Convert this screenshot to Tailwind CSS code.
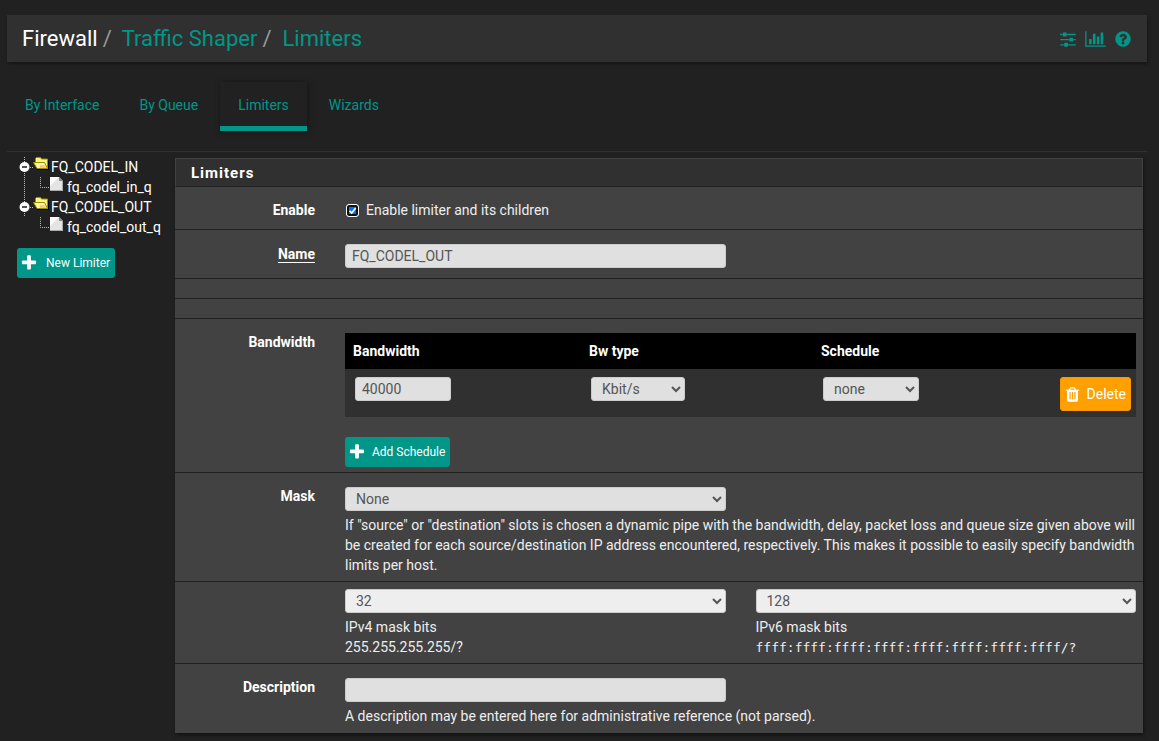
<!DOCTYPE html>
<html lang="en">
  <head>
    <meta charset="UTF-8">
    <meta name="viewport" content="width=device-width, initial-scale=1.0" />
    <title>Firewall: Traffic Shaper: Limiters</title>
    <script src="https://cdn.jsdelivr.net/npm/@tailwindcss/browser@4"></script>
  </head>

  <body class="bg-[#212121] font-[Roboto,sans-serif] text-sm text-[#eeeeee]">
    <!-- icon sprite -->
    <svg class="hidden">
      <symbol id="plus" viewBox="0 0 1792 1792"><path d="M1600 736v192q0 40-28 68t-68 28h-416v416q0 40-28 68t-68 28h-192q-40 0-68-28t-28-68v-416h-416q-40 0-68-28t-28-68v-192q0-40 28-68t68-28h416v-416q0-40 28-68t68-28h192q40 0 68 28t28 68v416h416q40 0 68 28t28 68z"/></symbol>
      <symbol id="branch" viewBox="0 0 34 20">
        <path d="M8.500 0v20M14 10.500h4" fill="none" stroke="#bbb" stroke-dasharray="1 1"/>
        <circle cx="8.500" cy="10" r="5" fill="#fff"/>
        <path d="M6 9h5v2H6z" fill="#555"/>
        <path d="M20 3h12l1 1v9H21z" fill="#000"/>
        <path d="M19.500 5V1.500l1-1h4l1 1.500h6V12" fill="#fbf37a" stroke="#989000"/>
        <path d="M17.500 5.500h11l3 6h-10.500z" fill="#fdf6a0" stroke="#989000"/>
        <path d="M24 8h4.500l2 3H24z" fill="#ffc58a"/>
      </symbol>
      <symbol id="leaf" viewBox="0 0 34 20">
        <path d="M8.500 0v10.500h9" fill="none" stroke="#bbb" stroke-dasharray="1 1"/>
        <path d="M18 0h9l4 4v10H18z" fill="#e4e4e4"/>
        <path d="M18 0h9L18 9z" fill="#fff"/>
        <path d="M27 0v4h4z" fill="#888"/>
        <path d="M18 13.500h12.500V4" fill="none" stroke="#aaa"/>
      </symbol>
    </svg>

    <div class="pt-[15px] pr-3 pb-2 pl-[7px]">
      <header class="flex items-center justify-between bg-[#303030] h-[47px] px-[15px] shadow-[1px_2px_3px_rgba(0,0,0,0.35)]">
        <nav aria-label="Breadcrumb">
          <ol class="flex text-[22px] leading-7">
            <li class="text-white">Firewall</li>
            <li class="text-[#999999] px-[5px]" aria-hidden="true">/</li>
            <li class="pl-[5px]"><a href="#" class="text-[#009688]">Traffic Shaper</a></li>
            <li class="text-[#999999] px-[5px]" aria-hidden="true">/</li>
            <li class="pl-[6px]"><a href="#" class="text-[#009688]">Limiters</a></li>
          </ol>
        </nav>
        <div class="flex gap-2 text-[#009688]">
          <a href="#" title="Limiter settings"><svg class="size-[18px] fill-current" viewBox="0 0 1792 1792"><path d="M480 1408v128h-352v-128h352zm352-128q26 0 45 19t19 45v256q0 26-19 45t-45 19h-256q-26 0-45-19t-19-45v-256q0-26 19-45t45-19h256zm160-384v128h-864v-128h864zm-640-512v128h-224v-128h224zm1312 1024v128h-736v-128h736zm-960-1152q26 0 45 19t19 45v256q0 26-19 45t-45 19h-256q-26 0-45-19t-19-45v-256q0-26 19-45t45-19h256zm640 512q26 0 45 19t19 45v256q0 26-19 45t-45 19h-256q-26 0-45-19t-19-45v-256q0-26 19-45t45-19h256zm320 128v128h-224v-128h224zm0-512v128h-864v-128h864z"/></svg></a>
          <a href="#" title="Related status"><svg class="w-[21px] h-[18px] fill-current" viewBox="0 0 2048 1792"><path d="M640 896v512h-256v-512h256zm384-512v1024h-256v-1024h256zm1024 1152v128h-2048v-1536h128v1408h1920zm-640-896v768h-256v-768h256zm384-384v1152h-256v-1152h256z"/></svg></a>
          <a href="#" title="Help"><svg class="size-[18px] fill-current" viewBox="0 0 1792 1792"><path d="M1024 1376v-192q0-14-9-23t-23-9h-192q-14 0-23 9t-9 23v192q0 14 9 23t23 9h192q14 0 23-9t9-23zm256-672q0-88-55.500-163t-138.500-116-170-41q-243 0-371 213-15 24 8 42l132 100q7 6 19 6 16 0 25-12 53-68 86-92 34-24 86-24 48 0 85.500 26t37.500 59q0 38-20 61t-68 45q-63 28-115.500 86.500t-52.500 125.500v36q0 14 9 23t23 9h192q14 0 23-9t9-23q0-19 21.500-49.500t54.500-49.500q32-18 49-28.500t46-35 44.500-48 28-60.500 12.500-81zm384 192q0 209-103 385.500t-279.500 279.500-385.500 103-385.500-103-279.500-279.500-103-385.500 103-385.500 279.500-279.500 385.500-103 385.500 103 279.500 279.500 103 385.500z"/></svg></a>
        </div>
      </header>

      <nav class="border-b border-[#303030] pt-5 pb-5">
        <ul class="flex gap-1 text-[#009688] leading-5">
          <li><a href="#" class="block px-[18px] pt-[13px] pb-[11px] border-b-5 border-transparent">By Interface</a></li>
          <li><a href="#" class="block px-[18px] pt-[13px] pb-[11px] border-b-5 border-transparent">By Queue</a></li>
          <li><a href="#" class="block px-[18px] pt-[13px] pb-[11px] border-b-5 border-[#009688] shadow-[1px_1px_6px_rgba(0,0,0,0.4)]">Limiters</a></li>
          <li><a href="#" class="block px-[18px] pt-[13px] pb-[11px] border-b-5 border-transparent">Wizards</a></li>
        </ul>
      </nav>

      <div class="flex items-start pr-1">
        <aside class="w-[168px] shrink-0 pt-[5px] pl-[9px]">
          <ul class="leading-5 text-white">
            <li>
              <a href="#" class="flex gap-px"><svg class="w-[34px] h-5"><use href="#branch"/></svg>FQ_CODEL_IN</a>
              <div class="flex">
                <svg class="w-4 h-5" viewBox="0 0 16 20"><path d="M8.500 0v20" stroke="#bbb" stroke-dasharray="1 1"/></svg>
                <a href="#" class="flex gap-px"><svg class="w-[34px] h-5"><use href="#leaf"/></svg>fq_codel_in_q</a>
              </div>
            </li>
            <li>
              <a href="#" class="flex gap-px"><svg class="w-[34px] h-5"><use href="#branch"/></svg>FQ_CODEL_OUT</a>
              <a href="#" class="flex gap-px pl-4"><svg class="w-[34px] h-5"><use href="#leaf"/></svg>fq_codel_out_q</a>
            </li>
          </ul>
          <button type="button" class="flex items-center gap-2 h-[30px] mt-[11px] ml-px pl-[3px] pr-[5px] rounded-[3px] bg-[#009688] text-white text-xs"><svg class="size-[18px] fill-current"><use href="#plus"/></svg>New Limiter</button>
        </aside>

        <form class="grow min-w-0 mt-[6px] bg-[#424242] shadow-[1px_2px_4px_rgba(0,0,0,0.5)] leading-5">
          <h2 class="bg-[#303030] border border-b-[#212121] border-[#424242] px-[15px] py-[3px] h-[29px] text-[15px] leading-[22px] font-bold tracking-[1px] text-white">Limiters</h2>

          <div class="flex gap-[30px] border-b border-[#212121] pt-[13px] pb-[9px] pr-[7px]">
            <span class="w-[140px] shrink-0 text-right font-bold text-white">Enable</span>
            <label class="flex items-center gap-[7px]">
              <span class="grid pl-px">
                <input type="checkbox" name="enabled" checked class="appearance-none col-start-1 row-start-1 size-[13px] rounded-[3px] border border-white bg-[#0075ff] ring-inset ring-2 ring-[#101010]">
                <svg class="col-start-1 row-start-1 size-[13px] pointer-events-none" viewBox="0 0 13 13" fill="none" stroke="#fff" stroke-width="1.600"><path d="M3.500 6.800l2.200 2.200 4-5"/></svg>
              </span>
              Enable limiter and its children
            </label>
          </div>

          <div class="flex gap-[30px] border-b border-[#212121] pt-[14px] pb-[10px] pr-[7px]">
            <label for="name" class="w-[140px] shrink-0 text-right font-bold text-white"><span class="border-b border-white">Name</span></label>
            <div class="grow grid grid-cols-2 gap-[30px]">
              <input id="name" type="text" value="FQ_CODEL_OUT" class="h-6 w-full px-[6px] rounded-[3px] border border-[#cccccc] bg-[#e0e0e0] text-[#555555]">
            </div>
          </div>

          <div class="h-5 border-b border-[#212121]"></div>
          <div class="h-5 border-b border-[#212121]"></div>

          <div class="flex gap-[30px] border-b border-[#212121] pt-[13px] pb-[5px] pr-[7px]">
            <span class="w-[140px] shrink-0 text-right font-bold text-white">Bandwidth</span>
            <div class="grow pt-px">
              <table class="w-full">
                <thead class="bg-black text-white">
                  <tr class="text-left">
                    <th class="w-[236px] p-2">Bandwidth</th>
                    <th class="w-[232px] p-2">Bw type</th>
                    <th class="p-2">Schedule</th>
                    <th></th>
                  </tr>
                </thead>
                <tbody class="bg-[#303030]">
                  <tr class="align-top h-12">
                    <td class="pt-2 pl-[10px]"><input type="text" aria-label="Bandwidth" value="40000" class="block h-6 w-24 px-[6px] rounded-[3px] border border-[#cccccc] bg-[#e0e0e0] text-[#555555]"></td>
                    <td class="pt-2 pl-[10px]"><select aria-label="Bw type" class="block h-6 w-[94px] px-[6px] rounded-[3px] border border-[#cccccc] bg-[#e0e0e0] text-[#555555]"><option>Kbit/s</option></select></td>
                    <td class="pt-2 pl-[10px]"><select aria-label="Schedule" class="block h-6 w-24 px-[6px] rounded-[3px] border border-[#cccccc] bg-[#e0e0e0] text-[#555555]"><option>none</option></select></td>
                    <td class="pt-2 pr-[5px]">
                      <button type="button" class="flex items-center gap-[6px] h-[34px] ml-auto pl-[3px] pr-1 rounded-[3px] border border-[#ff9800] bg-[#ffa000] text-white"><svg class="size-[17px] fill-current" viewBox="0 0 1792 1792"><path d="M704 1376v-704q0-14-9-23t-23-9h-64q-14 0-23 9t-9 23v704q0 14 9 23t23 9h64q14 0 23-9t9-23zm256 0v-704q0-14-9-23t-23-9h-64q-14 0-23 9t-9 23v704q0 14 9 23t23 9h64q14 0 23-9t9-23zm256 0v-704q0-14-9-23t-23-9h-64q-14 0-23 9t-9 23v704q0 14 9 23t23 9h64q14 0 23-9t9-23zm-544-992h448l-48-117q-7-9-17-11h-317q-10 2-17 11zm928 32v64q0 14-9 23t-23 9h-96v948q0 83-47 143.500t-113 60.500h-832q-66 0-113-58.500t-47-141.500v-952h-96q-14 0-23-9t-9-23v-64q0-14 9-23t23-9h309l70-167q15-37 54-63t79-26h320q40 0 79 26t54 63l70 167h309q14 0 23 9t9 23z"/></svg>Delete</button>
                    </td>
                  </tr>
                </tbody>
              </table>
              <button type="button" class="flex items-center gap-[6px] h-[30px] mt-5 pl-[3px] pr-[5px] rounded-[3px] bg-[#009688] text-white text-xs"><svg class="size-[18px] fill-current"><use href="#plus"/></svg>Add Schedule</button>
            </div>
          </div>

          <div class="flex gap-[30px] border-b border-[#212121] pt-[13px] pb-[6px] pr-[7px]">
            <label for="mask" class="w-[140px] shrink-0 text-right font-bold text-white">Mask</label>
            <div class="grow pt-px">
              <div class="grid grid-cols-2 gap-[30px]">
                <select id="mask" class="h-6 w-full px-[6px] rounded-[3px] border border-[#cccccc] bg-[#e0e0e0] text-[#555555]"><option>None</option></select>
              </div>
              <p class="pt-1">If "source" or "destination" slots is chosen a dynamic pipe with the bandwidth, delay, packet loss and queue size given above will be created for each source/destination IP address encountered, respectively. This makes it possible to easily specify bandwidth limits per host.</p>
            </div>
          </div>

          <div class="flex gap-[30px] border-b border-[#212121] pt-[7px] pb-[5px] pr-[7px]">
            <span class="w-[140px] shrink-0"></span>
            <div class="grow grid grid-cols-2 gap-[30px]">
              <div>
                <select id="maskbits" class="block h-6 w-full mb-1 px-[6px] rounded-[3px] border border-[#cccccc] bg-[#eeeeee] text-[#555555]"><option>32</option></select>
                <label for="maskbits" class="block">IPv4 mask bits<br>255.255.255.255/?</label>
              </div>
              <div>
                <select id="maskbitsv6" class="block h-6 w-full mb-1 px-[6px] rounded-[3px] border border-[#cccccc] bg-[#eeeeee] text-[#555555]"><option>128</option></select>
                <label for="maskbitsv6" class="block">IPv6 mask bits<br><span class="font-['DejaVu_Sans_Mono',monospace] text-[13px]">ffff:ffff:ffff:ffff:ffff:ffff:ffff:ffff/?</span></label>
              </div>
            </div>
          </div>

          <div class="flex gap-[30px] pt-[13px] pb-[7px] pr-[7px]">
            <label for="descr" class="w-[140px] shrink-0 text-right font-bold text-white">Description</label>
            <div class="grow pt-px">
              <div class="grid grid-cols-2 gap-[30px]">
                <input id="descr" type="text" class="h-6 w-full px-[6px] rounded-[3px] border border-[#cccccc] bg-[#e0e0e0] text-[#555555]">
              </div>
              <p class="pt-1">A description may be entered here for administrative reference (not parsed).</p>
            </div>
          </div>
        </form>
      </div>
    </div>
  </body>
</html>
